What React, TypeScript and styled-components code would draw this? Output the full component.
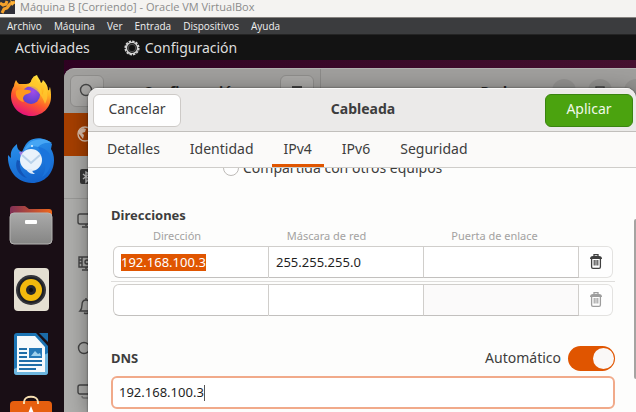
import React from "react";
import styled, { createGlobalStyle, css } from "styled-components";

const GlobalStyle = createGlobalStyle`
  * { box-sizing: border-box; }
  html, body, #root { height: 100%; }
  body {
    margin: 0;
    overflow: hidden;
    font-family: "Noto Sans", "Open Sans", sans-serif;
    font-size: 14px;
    color: #3d3d3d;
  }
  button, input { font: inherit; color: inherit; }
`;

const Screen = styled.div`
  display: flex;
  flex-direction: column;
  height: 100%;
  background: #2c001e;
`;

const TitleBar = styled.header`
  display: flex;
  align-items: center;
  gap: 5px;
  height: 18px;
  padding-bottom: 3px;
  flex: none;
  background: #f4f3f1;
  border-bottom: 1px solid #85827f;
  font-family: "Open Sans", sans-serif;
  font-size: 11px;
  line-height: 14px;
  color: #8b8b8b;
  white-space: nowrap;
`;

const MenuBar = styled.nav`
  display: flex;
  align-items: center;
  gap: 12px;
  height: 17px;
  padding-left: 7px;
  flex: none;
  background: #3b3c3e;
  border-bottom: 1px solid #242424;
`;

const MenuItem = styled.button`
  padding: 0;
  border: 0;
  background: none;
  font-family: "Open Sans", sans-serif;
  font-size: 10px;
  line-height: 14px;
  color: #f0f0f0;
`;

const TopBar = styled.div`
  display: flex;
  align-items: center;
  gap: 34px;
  height: 25px;
  padding-left: 15px;
  flex: none;
  background: #131313;
`;

const TopButton = styled.button`
  display: flex;
  align-items: center;
  gap: 5px;
  padding: 0;
  border: 0;
  background: none;
  line-height: 20px;
  color: #dedede;
`;

const Desktop = styled.div`
  display: flex;
  flex: 1;
  min-height: 0;
  background: linear-gradient(90deg, #2c0020, #45102f);
`;

const Dock = styled.aside`
  display: flex;
  flex-direction: column;
  width: 64px;
  padding-top: 4px;
  flex: none;
  overflow: hidden;
  background: #190e15;
`;

const DockButton = styled.button`
  display: block;
  height: 65px;
  padding: 0;
  border: 0;
  flex: none;
  background: none;
  svg { display: block; }
`;

const Stage = styled.main`
  position: relative;
  flex: 1;
  min-width: 0;
  padding-top: 8px;
  overflow: hidden;
`;

const SettingsWindow = styled.section`
  height: 100%;
  border-radius: 10px 0 0 0;
  border-top: 1px solid #b2b2b0;
  background: #aeaeac;
  overflow: hidden;
`;

const SettingsHeader = styled.div`
  display: flex;
  height: 44px;
  background: #a09f9d;
  font-weight: 700;
  color: #272727;
`;

const HeaderSide = styled.div`
  display: flex;
  justify-content: space-between;
  align-items: center;
  width: 257px;
  padding: 0 6px;
  border-right: 1px solid #8c8b89;
`;

const HeaderMain = styled.div`
  display: flex;
  flex: 1;
  justify-content: flex-end;
  align-items: center;
  gap: 12px;
  margin-right: -12px;
  span { margin-right: 33px; }
`;

const DimButton = styled.button`
  display: flex;
  align-items: center;
  justify-content: center;
  width: 34px;
  height: 32px;
  padding: 0;
  flex: none;
  border: 1px solid #8f8e8c;
  border-radius: 6px;
  background: #aaa9a7;
`;

const RoundButton = styled(DimButton)`
  width: 24px;
  height: 24px;
  border: 0;
  border-radius: 50%;
  background: #939290;
`;

const SideRow = styled.button<{ $active?: boolean; $line?: boolean }>`
  display: flex;
  align-items: center;
  width: 100%;
  height: 43px;
  padding: 0 0 0 13px;
  border: 0;
  border-bottom: 1px solid ${(p) => (p.$line ? "#999997" : "transparent")};
  background: ${(p) => (p.$active ? "#a63f00" : "none")};
`;

const Dialog = styled.section`
  position: absolute;
  inset: 28px 0 0 24px;
  display: flex;
  flex-direction: column;
  border-radius: 10px 10px 0 0;
  background: #fdfdfc;
  overflow: hidden;
  box-shadow: 0 0 2px 0 rgba(0, 0, 0, 0.6), 0 4px 22px 0 rgba(0, 0, 0, 0.4);
`;

const DialogHeader = styled.header`
  display: grid;
  grid-template-columns: 88px 1fr 88px;
  align-items: center;
  height: 44px;
  padding: 0 3px 0 5px;
  flex: none;
  background: #ebeae9;
  border-top: 1px solid #f8f8f7;
  border-bottom: 1px solid #c1bfbc;
`;

const DialogTitle = styled.h1`
  margin: 0;
  padding-bottom: 2px;
  font-size: 14px;
  line-height: 20px;
  text-align: center;
`;

const ActionButton = styled.button<{ $primary?: boolean }>`
  height: 33px;
  padding: 0 0 2px;
  border: 1px solid #cdcac7;
  border-radius: 6px;
  background: #fefefe;
  line-height: 20px;
  ${(p) =>
    p.$primary &&
    css`
      border-color: #3a8410;
      background: #4ba30f;
      color: #f0f8ea;
    `}
`;

const Tabs = styled.div`
  display: flex;
  gap: 6px;
  height: 36px;
  padding-left: 7px;
  flex: none;
  background: #fbfaf9;
  border-bottom: 1px solid #cfcdca;
`;

const Tab = styled.button<{ $active?: boolean }>`
  height: 35px;
  padding: 1px 12px 0;
  border: 0;
  border-bottom: 3px solid ${(p) => (p.$active ? "#e05500" : "transparent")};
  background: none;
  line-height: 20px;
`;

const Body = styled.div`
  display: flex;
  flex: 1;
  min-height: 0;
  overflow: hidden;
`;

const Form = styled.form`
  flex: 1;
  min-width: 0;
  padding: 0 19px 0 23px;
  margin-top: -12px;
`;

const Scrollbar = styled.div`
  width: 2px;
  height: 160px;
  margin-top: 51px;
  flex: none;
  border-radius: 2px 0 0 2px;
  background: #a5a4a2;
`;

const RadioLabel = styled.label`
  display: flex;
  align-items: center;
  gap: 4px;
  height: 24px;
  margin: 0 0 25px 112px;
  line-height: 20px;
`;

const Radio = styled.input`
  appearance: none;
  width: 16px;
  height: 16px;
  margin: 0;
  border: 1px solid #bdbab7;
  border-radius: 50%;
  background: #fefefe;
`;

const SectionTitle = styled.h2`
  margin: 0;
  font-size: 13px;
  line-height: 20px;
`;

const AddressTable = styled.table`
  width: 100%;
  table-layout: fixed;
  border-collapse: separate;
  border-spacing: 0;
`;

const ColumnHead = styled.th`
  height: 20px;
  padding: 2px 26px 0 0;
  font-size: 11px;
  font-weight: 400;
  line-height: 16px;
  color: #a3a2a1;
  &:first-child { width: 158px; }
  &:nth-child(2) { padding-right: 40px; }
  &:nth-child(3) { padding-right: 14px; }
  &:last-child { width: 36px; padding: 0; }
`;

const AddressRow = styled.tr<{ $spaced?: boolean }>`
  td {
    height: 37px;
    padding: ${(p) => (p.$spaced ? "2px 0 3px" : "0 0 2px")};
    ${(p) => !p.$spaced && css`border-bottom: 1px solid #dedddb;`}
    &:first-child { padding-left: 2px; }
    &:last-child { padding-right: 2px; }
  }
`;

const cell = css`
  display: flex;
  align-items: center;
  width: 100%;
  height: 32px;
  border: 1px solid #d0cecb;
  border-bottom-color: #c2c0be;
`;

const Cell = styled.label<{ $first?: boolean; $dim?: boolean }>`
  ${cell}
  padding-left: 7px;
  border-left-width: ${(p) => (p.$first ? "1px" : "0")};
  border-radius: ${(p) => (p.$first ? "6px 0 0 6px" : "0")};
  background: ${(p) => (p.$dim ? "#fbfafa" : "#fff")};
`;

const DeleteButton = styled.button`
  ${cell}
  justify-content: center;
  padding: 0;
  border-color: #e3e2e0;
  border-left: 0;
  border-radius: 0 6px 6px 0;
  background: #fefefe;
  &:disabled svg { opacity: 0.5; }
`;

const Entry = styled.input<{ $selected?: boolean; $fit?: boolean }>`
  width: 100%;
  height: 17px;
  min-width: 0;
  padding: 0;
  border: 0;
  outline: 0;
  background: ${(p) => (p.$selected ? "#e05500" : "transparent")};
  color: ${(p) => (p.$selected ? "#fff" : "#1f1f1f")};
  line-height: 17px;
  font-size: 13px;
  ${(p) => p.$fit && css`width: auto; field-sizing: content;`}
`;

const DnsHeader = styled.div`
  display: flex;
  justify-content: space-between;
  align-items: center;
  height: 26px;
  margin: 26px 0 5px;
`;

const SwitchLabel = styled.label`
  display: flex;
  align-items: center;
  gap: 7px;
  line-height: 20px;
`;

const Switch = styled.input`
  appearance: none;
  display: flex;
  justify-content: flex-end;
  width: 47px;
  height: 25px;
  margin: 0;
  padding: 2px 1px;
  border-radius: 13px;
  background: #e05500;
  &::before {
    content: "";
    width: 21px;
    height: 21px;
    border-radius: 50%;
    background: #faf8f7;
  }
`;

const DnsField = styled.label`
  display: flex;
  align-items: center;
  height: 33px;
  padding-left: 6px;
  border: 2px solid #f1aa8a;
  border-radius: 6px;
  background: #fff;
`;

const Caret = styled.span`
  width: 1px;
  height: 16px;
  background: #555;
`;

const FirefoxIcon = () => (
  <svg width="64" height="65" viewBox="0 0 64 65">
    <defs>
      <linearGradient id="ffBody" x1="0.8" y1="0" x2="0.35" y2="1">
        <stop offset="0" stopColor="#fff04a" />
        <stop offset="0.35" stopColor="#ffb520" />
        <stop offset="0.65" stopColor="#ff5a2c" />
        <stop offset="1" stopColor="#e3107c" />
      </linearGradient>
      <radialGradient id="ffGlobe" cx="0.6" cy="0.3" r="0.8">
        <stop offset="0" stopColor="#a24be8" />
        <stop offset="1" stopColor="#4d42cc" />
      </radialGradient>
    </defs>
    <path d="M37 11c1 3 3 4 4 8 2-1 1-2 2-3 3 3 5 6 5 10 2 1 1-2 2-3 1 4 1 7 1 10 0 11-9 19-20 19S11 43 11 32c0-4 1-7 3-10 0-2 1-4 2-6 1 2 2 3 3 4h7c2 0 4-1 5-2 0-3 3-6 6-7z" fill="url(#ffBody)" />
    <circle cx="31" cy="31" r="9" fill="url(#ffGlobe)" />
    <path d="M16 27c4-3 8-1 12-1 4 0 4 3-1 4-4 1-5 5-3 8-6-1-9-6-8-11z" fill="#ff981f" />
    <path d="M27 22c3-3 5-6 7-10 3 5 8 9 8 19 3-5 2-9 0-12 6 6 7 14 3 21-3-9-8-16-18-18z" fill="#ffca2d" opacity="0.75" />
  </svg>
);

const ThunderbirdIcon = () => (
  <svg width="64" height="65" viewBox="0 0 64 65">
    <defs>
      <linearGradient id="tbBody" x1="0.3" y1="0" x2="0.6" y2="1">
        <stop offset="0" stopColor="#2b93ec" />
        <stop offset="1" stopColor="#1262cc" />
      </linearGradient>
    </defs>
    <path d="M17 15c-5 4-7 8-6 14l-3-3c-1 14 8 28 24 28 13 0 22-10 22-23 0-4-1-8-3-11l1-5c-5-6-16-8-23-3-4 3-5 7-7 11-4-2-5-4-5-8z" fill="url(#tbBody)" />
    <path d="M24 22c2-6 6-10 12-11 6-2 12 0 16 3-7-1-11 1-14 4-5-2-9 0-14 4z" fill="#46a6f4" />
    <path d="M38 18c9 1 14 7 13 16-1 6-4 11-9 14 5-8 4-15-1-20 0-4-1-7-3-10z" fill="#1a74dc" />
    <path d="M17 31c-3 8 2 16 10 18-6-5-8-11-7-17z" fill="#1355b8" />
    <path d="M19 23c4 0 8-2 11-1-4 1-7 3-9 6z" fill="#9a7be4" />
    <circle cx="31" cy="31" r="11" fill="#e9f2fb" />
    <path d="M22 26l9 8 9-8" fill="none" stroke="#b9d2ea" strokeWidth="2" />
    <path d="M26 40c2 4 5 5 9 5-2-1-3-3-3-5z" fill="#dceafa" />
    <circle cx="32" cy="17" r="1" fill="#e9f6ff" />
  </svg>
);

const FilesIcon = () => (
  <svg width="64" height="65" viewBox="0 0 64 65">
    <defs>
      <linearGradient id="folderBack"><stop stopColor="#803056" /><stop offset="1" stopColor="#ef671b" /></linearGradient>
      <linearGradient id="folderFront" x2="0" y2="1"><stop stopColor="#aaa" /><stop offset="1" stopColor="#858584" /></linearGradient>
    </defs>
    <path d="M10 15q0-3 3-3h12l4 3h20q3 0 3 3v12H10z" fill="url(#folderBack)" />
    <rect x="10" y="19" width="42" height="31" rx="4" fill="url(#folderFront)" stroke="#b5b4b3" strokeWidth="1" />
    <rect x="25" y="26" width="12" height="4" rx="1" fill="#fff" />
  </svg>
);

const RhythmboxIcon = () => (
  <svg width="64" height="65" viewBox="0 0 64 65">
    <rect x="14" y="9" width="35" height="43" rx="4" fill="#e4dfd2" />
    <circle cx="31" cy="31" r="15" fill="#33343a" />
    <circle cx="31" cy="31" r="13" fill="#1e2025" />
    <circle cx="31" cy="31" r="11" fill="#f2b90d" />
    <circle cx="31" cy="31" r="5" fill="#24262b" />
    <circle cx="31" cy="31" r="2" fill="#0e0e10" />
  </svg>
);

const WriterIcon = () => (
  <svg width="64" height="65" viewBox="0 0 64 65">
    <path d="M17 9h19l12 13v26q0 3-3 3H17q-3 0-3-3V12q0-3 3-3z" fill="#1c75b5" />
    <path d="M48 29v19q0 3-3 3H17q-3 0-3-3v-3z" fill="#6db6df" />
    <path d="M39 9h9v9z" fill="#1b6ba8" />
    <path d="M17 12h18l10 11v25H17z" fill="#f6fafc" />
    <path d="M19 25h8M19 29h8M19 33h8M19 37h23M19 41h23M19 45h17" stroke="#1f6ea8" strokeWidth="2" />
    <rect x="29" y="24" width="13" height="10" fill="#2579b8" />
    <path d="M31 32l4-5 3 3 2-1 1 3z" fill="#9ed0ec" />
  </svg>
);

const SoftwareIcon = () => (
  <svg width="64" height="65" viewBox="0 0 64 65">
    <path d="M10 16q0-4 4-4h34q4 0 4 4v34H10z" fill="#e65f0f" />
    <path d="M24 15v-2c0-7 14-7 14 0v2" fill="none" stroke="#f5ddb0" strokeWidth="2" />
    <path d="M31 17l8 20h-5l-3-9-3 9h-5z" fill="#fff" />
  </svg>
);

const Glyph = ({ children, light }: { children: React.ReactNode; light?: boolean }) => (
  <svg width="18" height="18" viewBox="0 0 18 18" fill="none" stroke={light ? "#d9bda9" : "#454545"} strokeWidth="1.4">
    {children}
  </svg>
);

const TrashIcon = () => (
  <svg width="14" height="18" viewBox="0 0 14 18" fill="none" stroke="#3f3f3f">
    <path d="M5 3V1.7h4V3" strokeWidth="1.3" />
    <path d="M1 6Q1 3 4 3h6q3 0 3 3z" fill="#3f3f3f" stroke="none" />
    <path d="M2.6 6v8q0 1.4 1.4 1.4h6q1.4 0 1.4-1.4V6" strokeWidth="1.3" />
    <path d="M5.2 7v5.500M7 7v5.500M8.800 7v5.500" strokeWidth="1.1" />
  </svg>
);

const rows = [
  { ip: "192.168.100.3", mask: "255.255.255.0", selected: true },
  { ip: "", mask: "", selected: false },
];

export default function App() {
  return (
    <Screen>
      <GlobalStyle />
      <TitleBar>
        <svg width="15" height="15" viewBox="0 0 15 15">
          <path d="M0 0h15v14H0z" fill="#303039" />
          <path d="M0 3l3 2 3-1 1-3M2 13l2-4 3-1 3-4 5-2" fill="none" stroke="#f5a12b" strokeWidth="3" />
          <path d="M10 0l5 3-3 3z" fill="#ffb43b" />
        </svg>
        Máquina B [Corriendo] - Oracle VM VirtualBox
      </TitleBar>
      <MenuBar>
        {["Archivo", "Máquina", "Ver", "Entrada", "Dispositivos", "Ayuda"].map((m) => (
          <MenuItem key={m}>{m}</MenuItem>
        ))}
      </MenuBar>
      <TopBar>
        <TopButton>Actividades</TopButton>
        <TopButton>
          <svg width="16" height="16" viewBox="0 0 16 16" fill="none" stroke="#d5d5d5">
            <circle cx="8" cy="8" r="6.800" strokeWidth="1.600" strokeDasharray="2.400 1.160" />
            <circle cx="8" cy="8" r="5.600" strokeWidth="1.400" />
            <circle cx="8" cy="8" r="3.800" stroke="#555" />
          </svg>
          Configuración
        </TopButton>
      </TopBar>
      <Desktop>
        <Dock>
          <DockButton aria-label="Firefox"><FirefoxIcon /></DockButton>
          <DockButton aria-label="Thunderbird"><ThunderbirdIcon /></DockButton>
          <DockButton aria-label="Archivos"><FilesIcon /></DockButton>
          <DockButton aria-label="Rhythmbox"><RhythmboxIcon /></DockButton>
          <DockButton aria-label="Writer"><WriterIcon /></DockButton>
          <DockButton aria-label="Software"><SoftwareIcon /></DockButton>
        </Dock>
        <Stage>
          <SettingsWindow>
            <SettingsHeader>
              <HeaderSide>
                <DimButton aria-label="Buscar">
                  <Glyph><circle cx="8" cy="8" r="5.500" /><path d="M12 12l4 4" /></Glyph>
                </DimButton>
                <span>Configuración</span>
                <DimButton aria-label="Menú">
                  <Glyph><path d="M4 5h10M4 9h10M4 13h10" strokeWidth="2" /></Glyph>
                </DimButton>
              </HeaderSide>
              <HeaderMain>
                <span>Red</span>
                <RoundButton aria-label="Minimizar" />
                <RoundButton aria-label="Maximizar">
                  <Glyph><rect x="5" y="5" width="8" height="8" /></Glyph>
                </RoundButton>
                <RoundButton aria-label="Cerrar" />
              </HeaderMain>
            </SettingsHeader>
            <SideRow $active aria-label="Red">
              <Glyph light>
                <circle cx="8" cy="9" r="7" />
                <path d="M2 5l4-2 3 1-1 3-3 1 2 2-1 4-3-4-2-2zM11 6l3-2 2 6-3 2-2-3z" fill="#d9bda9" stroke="none" />
              </Glyph>
            </SideRow>
            <SideRow $line aria-label="Bluetooth">
              <Glyph>
                <rect x="3" y="1" width="13" height="15" rx="2" fill="#383838" stroke="none" />
                <path d="M6 6l6 5-3 3V4l3 2-6 5" stroke="#c4c4c4" />
              </Glyph>
            </SideRow>
            <SideRow aria-label="Fondo">
              <Glyph><path d="M17 3H3Q1 3 1 5v6q0 2 2 2h14M9 13v2M5 16h9" /></Glyph>
            </SideRow>
            <SideRow aria-label="Apariencia">
              <Glyph>
                <path d="M17 3H2v10h15M9 13v2M5 16h9M5 3v10M2 6h3M2 9h3" />
                <circle cx="10" cy="8" r="2" />
              </Glyph>
            </SideRow>
            <SideRow aria-label="Notificaciones">
              <Glyph><path d="M3 14q2-2 2-6 0-5 4-5 4 0 4 5 0 4 2 6zM7 16q2 1 4 0M9 3V1" /></Glyph>
            </SideRow>
            <SideRow aria-label="Búsqueda">
              <Glyph><circle cx="7" cy="8" r="5.500" /><path d="M11 12l4 4" /></Glyph>
            </SideRow>
            <SideRow aria-label="Multitarea">
              <Glyph><rect x="1" y="2" width="13" height="9" rx="2" /><path d="M5 13q0 2 2 2h10" stroke="#777" /></Glyph>
            </SideRow>
          </SettingsWindow>
          <Dialog role="dialog" aria-label="Cableada">
            <DialogHeader>
              <ActionButton>Cancelar</ActionButton>
              <DialogTitle>Cableada</DialogTitle>
              <ActionButton $primary>Aplicar</ActionButton>
            </DialogHeader>
            <Tabs role="tablist">
              {["Detalles", "Identidad", "IPv4", "IPv6", "Seguridad"].map((t) => (
                <Tab key={t} role="tab" $active={t === "IPv4"}>{t}</Tab>
              ))}
            </Tabs>
            <Body>
              <Form>
                <RadioLabel>
                  <Radio type="radio" name="method" />
                  Compartida con otros equipos
                </RadioLabel>
                <SectionTitle>Direcciones</SectionTitle>
                <AddressTable>
                  <thead>
                    <tr>
                      <ColumnHead>Dirección</ColumnHead>
                      <ColumnHead>Máscara de red</ColumnHead>
                      <ColumnHead>Puerta de enlace</ColumnHead>
                      <ColumnHead aria-label="Eliminar" />
                    </tr>
                  </thead>
                  <tbody>
                    {rows.map((r, i) => (
                      <AddressRow key={i} $spaced={i > 0}>
                        <td>
                          <Cell $first>
                            <Entry aria-label="Dirección" defaultValue={r.ip} $selected={r.selected} $fit={r.selected} />
                          </Cell>
                        </td>
                        <td><Cell><Entry aria-label="Máscara de red" defaultValue={r.mask} /></Cell></td>
                        <td><Cell $dim={i > 0}><Entry aria-label="Puerta de enlace" disabled={i > 0} /></Cell></td>
                        <td><DeleteButton type="button" aria-label="Eliminar" disabled={i > 0}><TrashIcon /></DeleteButton></td>
                      </AddressRow>
                    ))}
                  </tbody>
                </AddressTable>
                <DnsHeader>
                  <SectionTitle>DNS</SectionTitle>
                  <SwitchLabel>
                    Automático
                    <Switch type="checkbox" role="switch" defaultChecked />
                  </SwitchLabel>
                </DnsHeader>
                <DnsField>
                  <Entry aria-label="DNS" defaultValue="192.168.100.3" $fit />
                  <Caret />
                </DnsField>
              </Form>
              <Scrollbar />
            </Body>
          </Dialog>
        </Stage>
      </Desktop>
    </Screen>
  );
}
